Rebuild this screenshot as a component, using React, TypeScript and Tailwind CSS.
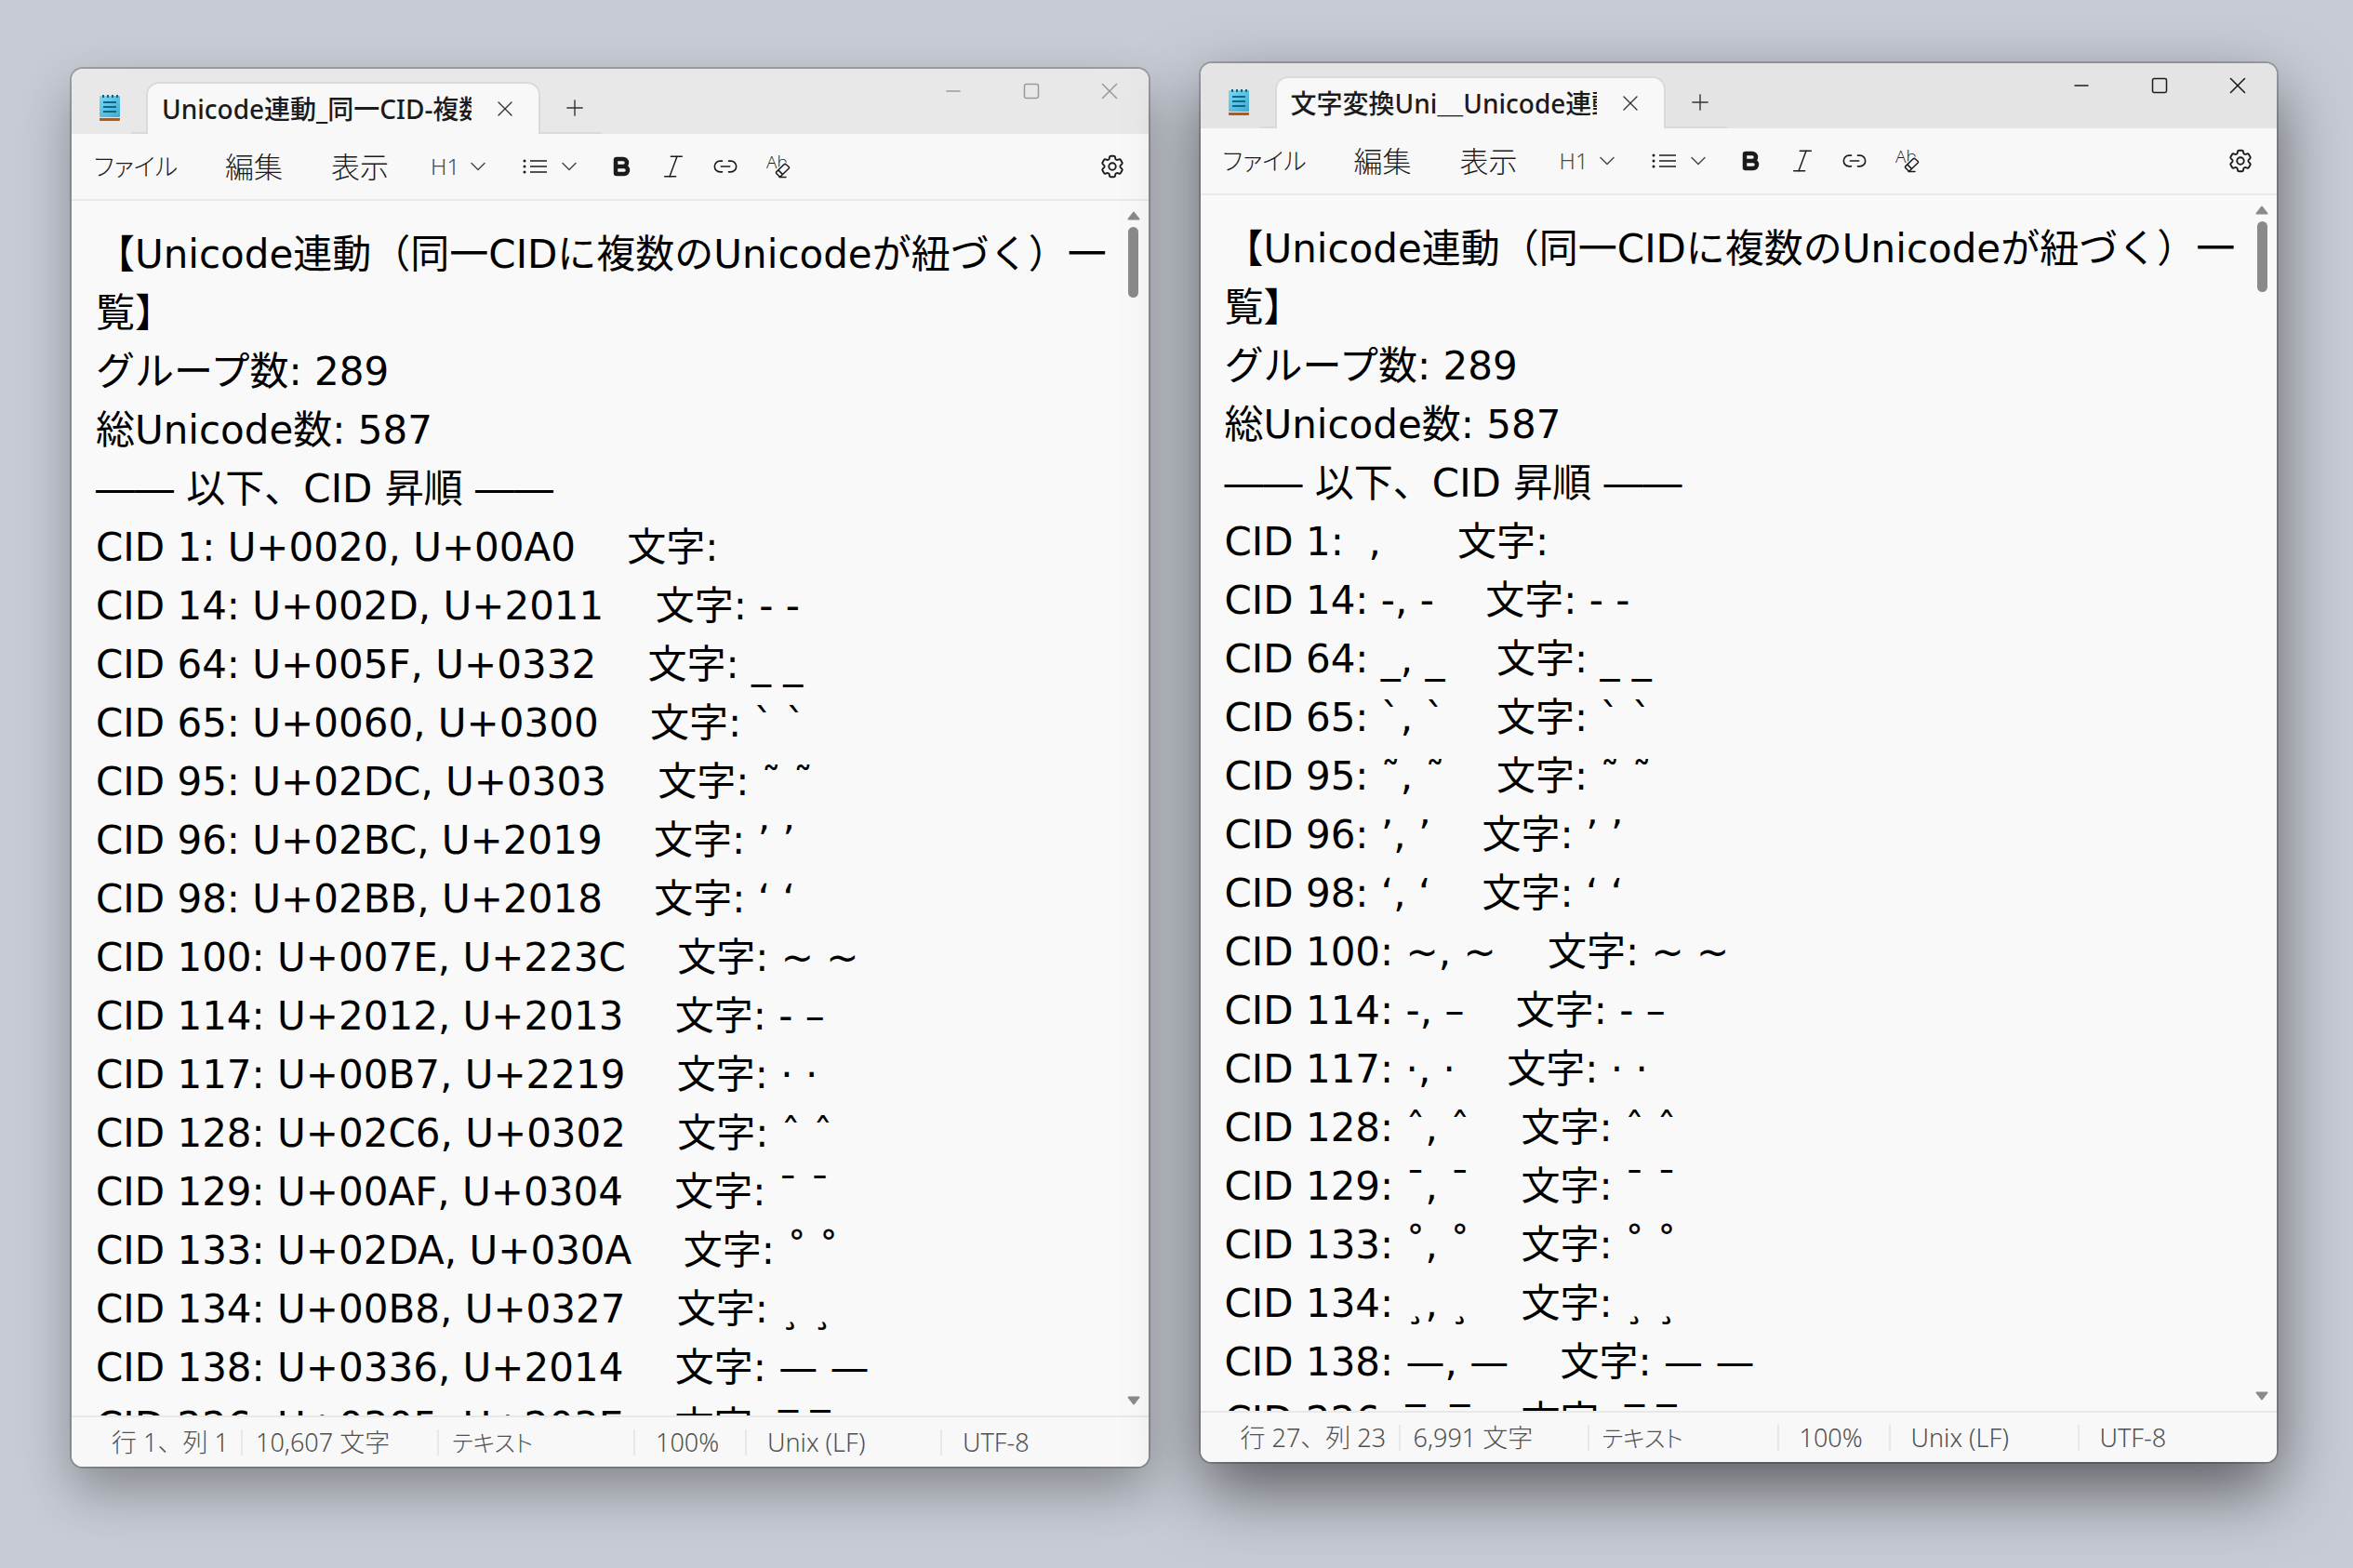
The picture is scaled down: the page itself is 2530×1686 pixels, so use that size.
import React from 'react';
import { Bold, ChevronDown, Italic, Link2, Minus, Plus, Square, X } from 'lucide-react';
import { HiOutlineCog6Tooth } from 'react-icons/hi2';

interface StatusItem {
  text: string;
  className: string;
}

interface NotepadWindowProps {
  id: string;
  title: string;
  text: string;
  status: StatusItem[];
  className: string;
  titleBarClassName: string;
  tabClassName: string;
  controlClassName: string;
}

const HEADER = [
  '【Unicode連動（同一CIDに複数のUnicodeが紐づく）一覧】',
  'グループ数: 289',
  '総Unicode数: 587',
  '―― 以下、CID 昇順 ――',
];

// [cid, code points, first character, second character]
const GROUPS: [number, string, string, string][] = [
  [1, 'U+0020, U+00A0', ' ', '\u00a0'],
  [14, 'U+002D, U+2011', '-', '\u2011'],
  [64, 'U+005F, U+0332', '_', '_'],
  [65, 'U+0060, U+0300', '`', '`'],
  [95, 'U+02DC, U+0303', '˜', '˜'],
  [96, 'U+02BC, U+2019', '\u02bc', '’'],
  [98, 'U+02BB, U+2018', '\u02bb', '‘'],
  [100, 'U+007E, U+223C', '~', '~'],
  [114, 'U+2012, U+2013', '-', '–'],
  [117, 'U+00B7, U+2219', '·', '·'],
  [128, 'U+02C6, U+0302', 'ˆ', 'ˆ'],
  [129, 'U+00AF, U+0304', '¯', '¯'],
  [133, 'U+02DA, U+030A', '˚', '˚'],
  [134, 'U+00B8, U+0327', '¸', '¸'],
  [138, 'U+0336, U+2014', '—', '—'],
  [226, 'U+0305, U+203E', '‾', '‾'],
];

const codeText = [
  ...HEADER,
  ...GROUPS.map(([cid, codes, a, b]) => `CID ${cid}: ${codes}　 文字: ${a} ${b}`),
].join('\n');

const charText = [
  ...HEADER,
  ...GROUPS.map(([cid, , a, b]) => `CID ${cid}: ${a}, ${b}　 文字: ${a} ${b}`),
].join('\n');

const NotepadIcon = () => (
  <svg className="w-[22px] h-7 shrink-0" viewBox="0 0 22 28" aria-hidden="true">
    <defs>
      <linearGradient id="page" x1="0" y1="0" x2="1" y2="1">
        <stop offset="0" stopColor="#7ad8f5" />
        <stop offset="1" stopColor="#3fa9d0" />
      </linearGradient>
    </defs>
    <rect x="0" y="23" width="22" height="5" rx="1" fill="#b35a12" />
    <rect x="0" y="22" width="22" height="3" fill="#e9e4e0" />
    <rect x="0" y="1" width="22" height="23" rx="1" fill="url(#page)" />
    <path d="M4 0v3M9 0v3M14 0v3M19 0v3" stroke="#0b6788" strokeWidth="2" />
    <path d="M4 8h14M4 13h14M4 18h14" stroke="#0b6788" strokeWidth="2" />
  </svg>
);

const ListIcon = () => (
  <svg className="w-[26px] h-4" viewBox="0 0 26 16" aria-hidden="true">
    <path d="M8 2h18M8 8h18M8 14h18" stroke="#1b1b1b" strokeWidth="1.5" />
    <g fill="#1b1b1b">
      <circle cx="2" cy="2" r="1.5" />
      <circle cx="2" cy="8" r="1.5" />
      <circle cx="2" cy="14" r="1.5" />
    </g>
  </svg>
);

const ClearFormatIcon = () => (
  <svg className="w-[26px] h-[26px]" viewBox="0 0 26 26" aria-hidden="true">
    <text x="0" y="15" fontSize="19" fontFamily="'Open Sans', 'Noto Sans', sans-serif" fontWeight="300" fill="#1b1b1b">Ab</text>
    <path
      d="M18.8 11 11 18.6a1.5 1.5 0 0 0 0 2.1l2.6 2.6a1.5 1.5 0 0 0 2.1 0l8.3-8a1.5 1.5 0 0 0 0-2.1L21.4 11a1.9 1.9 0 0 0-2.6 0Z"
      fill="#f8f8f8"
      stroke="#f8f8f8"
      strokeWidth="4"
    />
    <path
      d="M18.8 11 11 18.6a1.5 1.5 0 0 0 0 2.1l2.6 2.6a1.5 1.5 0 0 0 2.1 0l8.3-8a1.5 1.5 0 0 0 0-2.1L21.4 11a1.9 1.9 0 0 0-2.6 0ZM12.8 16.9l4.8 4.7M14 24.5h7"
      fill="none"
      stroke="#1b1b1b"
      strokeWidth="1.5"
      strokeLinecap="round"
    />
  </svg>
);

const ScrollArrow = ({ down = false }: { down?: boolean }) => (
  <svg className="w-[14px] h-[10px]" viewBox="0 0 14 10" aria-hidden="true">
    <path
      d={down ? 'M1.5 1.5h11L7 8.5Z' : 'M1.5 8.5h11L7 1.5Z'}
      fill="#8a8a8a"
      stroke="#8a8a8a"
      strokeWidth="2"
      strokeLinejoin="round"
    />
  </svg>
);

const NotepadWindow: React.FC<NotepadWindowProps> = ({
  id,
  title,
  text,
  status,
  className,
  titleBarClassName,
  tabClassName,
  controlClassName,
}) => {
  return (
    <section
      aria-labelledby={`${id}-title`}
      className={`flex-1 min-w-0 flex flex-col overflow-hidden rounded-xl bg-[#f9f9f9] ${className}`}
    >
      {/* Title bar */}
      <header className={`h-[70px] shrink-0 flex ${titleBarClassName}`}>
        <div className="flex items-center pl-[30px] pr-3 pt-[14px]">
          <NotepadIcon />
        </div>
        <div className="self-end w-4 h-[2px] bg-[#dadada]" />
        <div
          className={`self-end h-14 shrink-0 flex items-center pl-[15px] pr-[22px] rounded-t-[14px] border-2 border-b-0 border-[#dadada] bg-[#f8f8f8] ${tabClassName}`}
        >
          <button
            id={`${id}-title`}
            type="button"
            className="flex-1 min-w-0 overflow-hidden whitespace-nowrap text-left text-[28px] leading-10 font-medium text-[#1b1b1b]"
          >
            {title}
          </button>
          <button type="button" aria-label="タブを閉じる" className="ml-[22px]">
            <X className="w-7 h-7 text-[#333333]" strokeWidth={1.2} />
          </button>
        </div>
        <div className="self-end h-14 w-[66px] flex items-center justify-center border-b-2 border-[#dadada]">
          <button type="button" aria-label="新しいタブ" className="pl-2 pt-[2px]">
            <Plus className="w-7 h-7 text-[#333333]" strokeWidth={1.2} />
          </button>
        </div>
        <div className={`ml-auto flex h-12 ${controlClassName}`}>
          <button type="button" aria-label="最小化" className="w-[84px] flex items-center justify-center">
            <Minus className="w-6 h-6" strokeWidth={1.5} />
          </button>
          <button type="button" aria-label="最大化" className="w-[84px] flex items-center justify-center">
            <Square className="w-5 h-5" strokeWidth={1.8} />
          </button>
          <button type="button" aria-label="閉じる" className="w-[84px] flex items-center justify-center">
            <X className="w-[30px] h-[30px]" strokeWidth={1.3} />
          </button>
        </div>
      </header>

      {/* Menu and formatting */}
      <div className="h-[72px] shrink-0 flex items-center border-b-2 border-[#e9e9e9] bg-[#f8f8f8] text-[#1b1b1b]">
        <button
          type="button"
          className="ml-6 w-[90px] text-[26px] font-light whitespace-nowrap [font-feature-settings:'palt']"
        >
          ファイル
        </button>
        <button type="button" className="ml-[50px] w-16 text-[31px] font-light whitespace-nowrap">
          編集
        </button>
        <button type="button" className="ml-[50px] w-16 text-[31px] font-light whitespace-nowrap">
          表示
        </button>
        <button type="button" aria-label="見出し" className="ml-[44px] flex items-center gap-[6px] text-[#4a4a4a]">
          <span className="text-2xl leading-8 font-light">H1</span>
          <ChevronDown className="w-7 h-7" strokeWidth={1.3} />
        </button>
        <button type="button" aria-label="リスト" className="ml-[34px] flex items-center gap-[10px] text-[#4a4a4a]">
          <ListIcon />
          <ChevronDown className="w-7 h-7" strokeWidth={1.3} />
        </button>
        <button type="button" aria-label="太字" className="ml-[30px]">
          <Bold className="w-6 h-6" strokeWidth={4.5} />
        </button>
        <button type="button" aria-label="斜体" className="ml-7">
          <Italic className="w-8 h-8" strokeWidth={1.1} />
        </button>
        <button type="button" aria-label="リンク" className="ml-[26px]">
          <Link2 className="w-7 h-7" strokeWidth={1.4} />
        </button>
        <button type="button" aria-label="書式のクリア" className="ml-[30px]">
          <ClearFormatIcon />
        </button>
        <button type="button" aria-label="設定" className="ml-auto mr-6">
          <HiOutlineCog6Tooth className="w-[30px] h-[30px]" />
        </button>
      </div>

      {/* Editor */}
      <div className="flex-1 min-h-0 flex">
        <textarea
          aria-label={title}
          readOnly
          defaultValue={text}
          className="flex-1 min-w-0 resize-none overflow-hidden outline-none bg-transparent pl-[26px] pt-[26px] text-[42px] leading-[63px] text-black font-['DejaVu_Sans','Noto_Sans_CJK_JP',sans-serif]"
        />
        <div className="w-8 shrink-0 flex flex-col items-center pt-[11px] pb-[11px]">
          <ScrollArrow />
          <div className="w-[11px] h-[76px] mt-[7px] rounded-full bg-[#8a8a8a]" />
          <div className="mt-auto flex">
            <ScrollArrow down />
          </div>
        </div>
      </div>

      {/* Status bar */}
      <footer className="h-[55px] shrink-0 flex items-center border-t-2 border-[#e8e8e8] bg-[#f8f8f8] text-[27px] leading-7 font-light text-[#505050] whitespace-nowrap">
        {status.map((item) => (
          <div
            key={item.text}
            className={`h-7 flex items-center border-r-2 border-[#e8e8e8] last:border-r-0 ${item.className}`}
          >
            {item.text}
          </div>
        ))}
      </footer>
    </section>
  );
};

const App: React.FC = () => {
  return (
    <main className="h-screen flex gap-14 pl-[77px] pr-[82px] overflow-hidden bg-[#c7cbd4] font-['Noto_Sans','Noto_Sans_CJK_JP',sans-serif]">
      <NotepadWindow
        id="codes"
        title="Unicode連動_同一CID-複数"
        text={codeText}
        className="mt-[74px] mb-[109px] shadow-[0_0_0_2px_rgba(0,0,0,0.2),0_26px_56px_rgba(0,0,0,0.32)]"
        titleBarClassName="bg-[#e8e8e8]"
        tabClassName="w-[424px]"
        controlClassName="text-[#9a9a9a]"
        status={[
          { text: '行 1、列 1', className: 'pl-[43px] w-[184px]' },
          { text: '10,607 文字', className: 'pl-[14px] w-[211px]' },
          { text: 'テキスト', className: "pl-[14px] w-[211px] text-[25px] [font-feature-settings:'palt']" },
          { text: '100%', className: 'pl-[22px] w-[120px]' },
          { text: 'Unix (LF)', className: 'pl-[22px] w-[210px]' },
          { text: 'UTF-8', className: 'pl-[22px]' },
        ]}
      />
      <NotepadWindow
        id="chars"
        title="文字変換Uni＿Unicode連動"
        text={charText}
        className="mt-[68px] mb-[114px] shadow-[0_0_0_2px_rgba(0,0,0,0.2),0_30px_72px_rgba(0,0,0,0.55)]"
        titleBarClassName="bg-[#e4e4e4]"
        tabClassName="w-[420px]"
        controlClassName="text-[#1b1b1b]"
        status={[
          { text: '行 27、列 23', className: 'pl-[43px] w-[215px]' },
          { text: '6,991 文字', className: 'pl-[14px] w-[203px]' },
          { text: 'テキスト', className: "pl-[14px] w-[204px] text-[25px] [font-feature-settings:'palt']" },
          { text: '100%', className: 'pl-[22px] w-[120px]' },
          { text: 'Unix (LF)', className: 'pl-[22px] w-[203px]' },
          { text: 'UTF-8', className: 'pl-[22px]' },
        ]}
      />
    </main>
  );
};

export default App;
